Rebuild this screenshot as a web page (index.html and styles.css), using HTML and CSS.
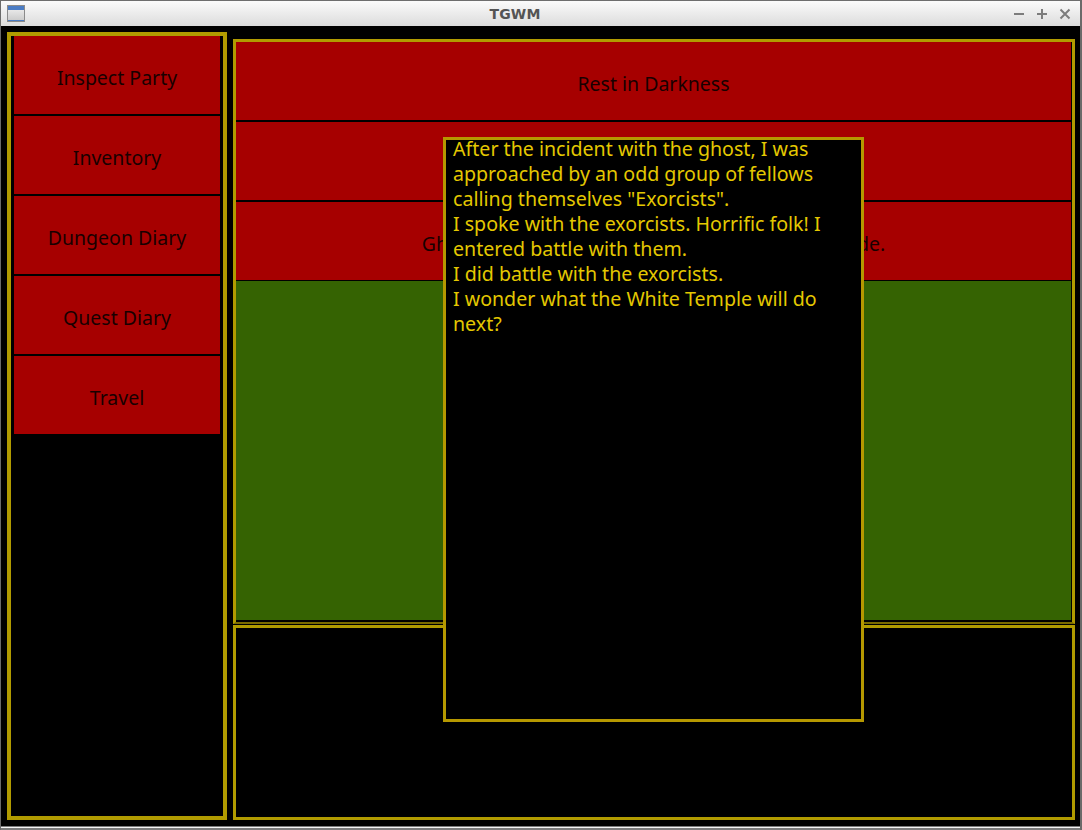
FILE: index.html
```html
<!DOCTYPE html>
<html>
<head>
<meta charset="utf-8">
<title>TGWM</title>
<link rel="stylesheet" href="styles.css">
</head>
<body>
<div class="window">
  <div class="titlebar">
    <div class="tb-icon">
      <svg width="18" height="17" viewBox="0 0 18 17">
        <defs>
          <linearGradient id="ib" x1="0" y1="0" x2="0" y2="1">
            <stop offset="0" stop-color="#f4f4f4"/>
            <stop offset="1" stop-color="#c8c8c8"/>
          </linearGradient>
        </defs>
        <rect x="0.5" y="0.5" width="17" height="16" fill="url(#ib)" stroke="#8a8a8a"/>
        <rect x="1" y="1" width="16" height="4" fill="#4a7cc4"/>
        <rect x="1" y="15" width="16" height="1" fill="#4a7cc4"/>
      </svg>
    </div>
    <div class="tb-title">TGWM</div>
    <div class="tb-buttons">
      <svg width="12" height="12" viewBox="0 0 12 12"><path d="M1 6H11" stroke="#7c7c7c" stroke-width="2"/></svg>
      <svg width="12" height="12" viewBox="0 0 12 12"><path d="M1 6H11M6 1V11" stroke="#7c7c7c" stroke-width="2"/></svg>
      <svg width="12" height="12" viewBox="0 0 12 12"><path d="M1.5 1.5L10.5 10.5M10.5 1.5L1.5 10.5" stroke="#7c7c7c" stroke-width="2"/></svg>
    </div>
  </div>
  <div class="content">
    <div class="sidebar">
      <div class="btn">Inspect Party</div>
      <div class="btn">Inventory</div>
      <div class="btn">Dungeon Diary</div>
      <div class="btn">Quest Diary</div>
      <div class="btn">Travel</div>
    </div>
    <div class="main">
      <div class="top-panel">
        <div class="rbtn">Rest in Darkness</div>
        <div class="rbtn">Speak with the Exorcists</div>
        <div class="rbtn last">Ghoulish wailing can be heard from the other side.</div>
        <div class="field"></div>
      </div>
      <div class="bottom-panel"></div>
    </div>
    <div class="overlay">
      <p class="diary">After the incident with the ghost, I was approached by an odd group of fellows calling themselves "Exorcists".<br>I spoke with the exorcists. Horrific folk! I entered battle with them.<br>I did battle with the exorcists.<br>I wonder what the White Temple will do next?</p>
    </div>
  </div>
  <div class="bottom-frame"></div>
</div>
</body>
</html>
```
FILE: styles.css
```css
html, body {
  margin: 0;
  padding: 0;
  background: #000;
}
.window {
  width: 1082px;
  height: 830px;
  box-sizing: border-box;
  border-left: 1px solid #6a6a6a;
  border-right: 2px solid #6a6a6a;
  display: flex;
  flex-direction: column;
  position: relative;
  font-family: "Noto Sans", "Open Sans", sans-serif;
}
.titlebar {
  height: 26px;
  box-sizing: border-box;
  border-top: 1px solid #6e6e6e;
  background: linear-gradient(#fbfbfb, #dcdcdc);
  display: flex;
  align-items: center;
  flex: none;
}
.tb-icon {
  width: 25px;
  padding-left: 6px;
  box-sizing: border-box;
  display: flex;
  align-items: center;
  height: 100%;
}
.tb-title {
  flex: 1;
  text-align: center;
  font-family: "DejaVu Sans", sans-serif;
  font-weight: bold;
  font-size: 14px;
  color: #545454;
  letter-spacing: 0.2px;
}
.tb-buttons {
  display: flex;
  gap: 11px;
  align-items: center;
  padding-right: 9px;
  box-sizing: border-box;
  justify-content: flex-end;
  width: 76px;
}
.tb-buttons svg { display: block; }
.content {
  flex: 1;
  background: #000;
  display: flex;
  gap: 6px;
  padding: 6px 5px 6px 6px;
  min-height: 0;
}
.sidebar {
  width: 220px;
  flex: none;
  box-sizing: border-box;
  border: 4px solid #b19b00;
  padding: 0 3px;
  background: #000;
}
.btn {
  height: 78px;
  margin-bottom: 2px;
  background: #a60000;
  color: #180000;
  font-size: 19.5px;
  display: flex;
  align-items: center;
  justify-content: center;
  padding-top: 5px;
  box-sizing: border-box;
}
.main {
  flex: 1;
  display: flex;
  flex-direction: column;
  gap: 1px;
  padding-top: 7px;
  min-width: 0;
}
.top-panel {
  flex: 1;
  box-sizing: border-box;
  border: 3px solid #b19b00;
  border-bottom: 2px solid #7a6b00;
  padding-right: 1px;
  padding-bottom: 2px;
  background: #000;
  display: flex;
  flex-direction: column;
  min-height: 0;
}
.rbtn {
  height: 78px;
  flex: none;
  margin-bottom: 2px;
  background: #a60000;
  color: #180000;
  font-size: 19.5px;
  display: flex;
  align-items: center;
  justify-content: center;
  padding-top: 5px;
  box-sizing: border-box;
  white-space: nowrap;
  overflow: hidden;
}
.rbtn.last { margin-bottom: 1px; }
.field {
  flex: 1;
  background: #356302;
}
.bottom-panel {
  height: 195px;
  flex: none;
  box-sizing: border-box;
  border: 3px solid #b19b00;
  background: #000;
}
.overlay {
  position: absolute;
  left: 442px;
  top: 137px;
  width: 421px;
  height: 585px;
  box-sizing: border-box;
  border: 3px solid #b59800;
  background: #000;
  padding: 0 6px 0 7px;
  overflow: hidden;
}
.diary {
  margin: -4px 0 0 0;
  color: #e4c800;
  font-size: 19.6px;
  line-height: 25px;
}
.bottom-frame {
  height: 4px;
  flex: none;
  box-sizing: border-box;
  border-top: 1px solid #7a7a7a;
  border-bottom: 2px solid #7a7a7a;
  background: #f4f4f4;
}
```
